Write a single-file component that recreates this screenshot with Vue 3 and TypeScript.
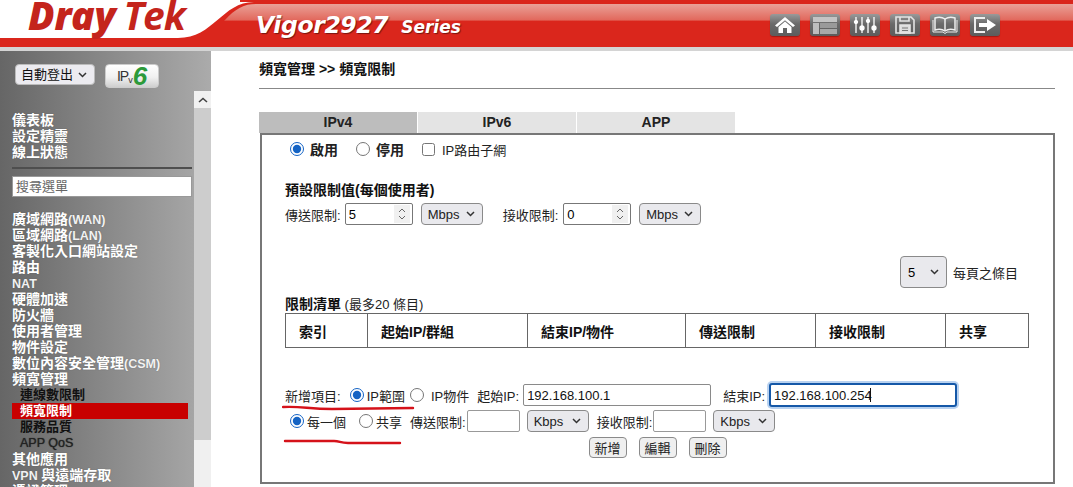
<script setup lang="ts">
import { ref, onMounted } from 'vue'

interface MenuItem {
  label: string
  sub?: boolean
  active?: boolean
}

const topLinks = ['儀表板', '設定精靈', '線上狀態']

const menu: MenuItem[] = [
  { label: '廣域網路(WAN)' },
  { label: '區域網路(LAN)' },
  { label: '客製化入口網站設定' },
  { label: '路由' },
  { label: 'NAT' },
  { label: '硬體加速' },
  { label: '防火牆' },
  { label: '使用者管理' },
  { label: '物件設定' },
  { label: '數位內容安全管理(CSM)' },
  { label: '頻寬管理' },
  { label: '連線數限制', sub: true },
  { label: '頻寬限制', sub: true, active: true },
  { label: '服務品質', sub: true },
  { label: 'APP QoS', sub: true },
  { label: '其他應用' },
  { label: 'VPN 與遠端存取' },
  { label: '憑證管理' },
]

// latin runs in the menu are drawn smaller and lighter than the chinese ones
const parts = (label: string) => label.split(/([A-Za-z() ]+)/).filter((p) => p !== '')
const isLatin = (part: string) => /^[A-Za-z() ]+$/.test(part)

const tabs = ['IPv4', 'IPv6', 'APP']
const columns = ['索引', '起始IP/群組', '結束IP/物件', '傳送限制', '接收限制', '共享']

const enabled = ref('on')
const rangeType = ref('range')
const shareType = ref('each')
const startIp = ref('192.168.100.1')
const endIp = ref('192.168.100.254')
const endInput = ref<HTMLInputElement | null>(null)

onMounted(() => {
  if (endInput.value) {
    endInput.value.focus()
    endInput.value.setSelectionRange(endIp.value.length, endIp.value.length)
  }
})
</script>

<template>
  <div class="page">
    <header class="topbar">
      <svg class="swoosh" width="1073" height="51" viewBox="0 0 1073 51" aria-hidden="true">
        <defs>
          <linearGradient id="gloss" x1="0" y1="0" x2="0" y2="1">
            <stop offset="0" stop-color="#e9a198" />
            <stop offset="0.95" stop-color="#e2685c" />
            <stop offset="1" stop-color="#da261c" />
          </linearGradient>
        </defs>
        <rect x="0" y="47" width="1073" height="4" fill="#d4d4d4" />
        <path d="M0 38 H178 C214 38 222 2 254 2 H1073 V47 H0 Z" fill="#da261c" />
        <path d="M224 21 C236 8 244 4 256 4 H1073 V21 Z" fill="url(#gloss)" />
        <rect x="240" y="0" width="833" height="2" fill="#da261c" />
      </svg>
      <div class="logo"><span class="dray">Dray</span><span class="tek">Tek</span></div>
      <div class="model"><span class="vigor">Vigor2927</span><span class="series">Series</span></div>
      <nav class="tools">
        <button class="tool" aria-label="home">
          <svg width="22" height="18" viewBox="0 0 22 18"><path d="M11 1 L1 9.5 L3 11 L11 4.2 L19 11 L21 9.5 Z M4.5 11 L11 5.6 L17.5 11 V17 H13 V12 H9 V17 H4.5 Z" fill="#fff" /></svg>
        </button>
        <button class="tool" aria-label="layout">
          <svg width="24" height="18" viewBox="0 0 24 18"><rect x="0" y="1" width="24" height="5" fill="#c4c4c4" /><rect x="0" y="7" width="6" height="11" fill="#bdbdbd" /><rect x="7" y="7" width="17" height="5" fill="#9a9a9a" /><rect x="7" y="13" width="17" height="5" fill="#a8a8a8" /></svg>
        </button>
        <button class="tool" aria-label="settings">
          <svg width="24" height="18" viewBox="0 0 24 18" stroke="#fff" stroke-width="1.3" fill="#fff"><path d="M3 1V17M9 1V17M15 1V17M21 1V17" /><circle cx="3" cy="6" r="1.5" /><circle cx="9" cy="12" r="2" /><circle cx="15" cy="5" r="1.5" /><circle cx="21" cy="12" r="2" /></svg>
        </button>
        <button class="tool" aria-label="save">
          <svg width="22" height="18" viewBox="0 0 22 18" fill="none" stroke="#e4e4e4" stroke-width="1.6"><path d="M2 1H17L20 4V17H2Z" /><path d="M6 1V5H15V1" /><path d="M6 9H16V17H6Z" fill="#dcdcdc" /><path d="M8 12H14M8 14.5H14" stroke="#777" stroke-width="1" /></svg>
        </button>
        <button class="tool" aria-label="manual">
          <svg width="26" height="18" viewBox="0 0 26 18" fill="none" stroke="#eee" stroke-width="1.5"><path d="M13 3C10 1 6 1 3 2V14C6 13 10 13 13 15C16 13 20 13 23 14V2C20 1 16 1 13 3Z" /><path d="M13 3V15" /><path d="M1 4V16H11L13 17.5L15 16H25V4" stroke-width="1" /></svg>
        </button>
        <button class="tool" aria-label="logout">
          <svg width="24" height="18" viewBox="0 0 24 18"><path d="M12 2H2V16H12" fill="none" stroke="#eee" stroke-width="2" /><path d="M6 7H14V3L23 9L14 15V11H6Z" fill="#fff" /></svg>
        </button>
      </nav>
    </header>

    <div class="body">
      <aside class="sidebar">
        <div class="side-top">
          <select class="logout-select">
            <option>自動登出</option>
          </select>
          <button class="ipv6"><span class="ip">IP</span><sub>v</sub><span class="six">6</span></button>
        </div>
        <div class="side-scroll">
          <div class="side-menu">
            <a v-for="item in topLinks" :key="item" class="menu-item">{{ item }}</a>
            <hr class="side-rule" />
            <input class="search" placeholder="搜尋選單" />
            <div class="menu-list">
              <a
                v-for="item in menu"
                :key="item.label"
                class="menu-item"
                :class="{ sub: item.sub, active: item.active }"
              ><span v-for="part in parts(item.label)" :key="part" :class="{ latin: isLatin(part) }">{{ part }}</span></a>
            </div>
          </div>
          <div class="scrollbar">
            <div class="scroll-up">
              <svg width="10" height="6" viewBox="0 0 10 6"><path d="M1 5L5 1.5L9 5" fill="none" stroke="#444" stroke-width="1.6" /></svg>
            </div>
            <div class="scroll-thumb"></div>
          </div>
        </div>
      </aside>

      <main class="content">
        <h1 class="crumb">頻寬管理 &gt;&gt; 頻寬限制</h1>
        <hr class="rule" />

        <div class="tabs">
          <div v-for="(tab, i) in tabs" :key="tab" class="tab" :class="{ current: i === 0 }">{{ tab }}</div>
        </div>

        <section class="panel">
          <div class="enable-row">
            <label class="strong"><input v-model="enabled" type="radio" value="on" />啟用</label>
            <label class="strong"><input v-model="enabled" type="radio" value="off" />停用</label>
            <label class="subnet"><input type="checkbox" />IP路由子網</label>
          </div>

          <h2 class="title">預設限制值(每個使用者)</h2>
          <div class="limit-row">
            <span>傳送限制:</span>
            <span class="spin"><input class="num" value="5" /><i class="spin-arrows"><svg width="8" height="14" viewBox="0 0 8 14"><path d="M1 5L4 2L7 5M1 9L4 12L7 9" fill="none" stroke="#666" /></svg></i></span>
            <select class="unit"><option>Mbps</option></select>
            <span class="gap-label">接收限制:</span>
            <span class="spin"><input class="num" value="0" /><i class="spin-arrows"><svg width="8" height="14" viewBox="0 0 8 14"><path d="M1 5L4 2L7 5M1 9L4 12L7 9" fill="none" stroke="#666" /></svg></i></span>
            <select class="unit"><option>Mbps</option></select>
          </div>

          <div class="page-size">
            <select class="size"><option>5</option></select>
            <span>每頁之條目</span>
          </div>

          <div class="list-title"><b>限制清單</b> (最多20 條目)</div>
          <table class="list">
            <thead>
              <tr>
                <th v-for="col in columns" :key="col">{{ col }}</th>
              </tr>
            </thead>
          </table>

          <div class="add-row">
            <span>新增項目:</span>
            <label class="tight range"><input v-model="rangeType" type="radio" value="range" />IP範圍</label>
            <label class="tight obj"><input v-model="rangeType" type="radio" value="object" />IP物件</label>
            <span class="start-label">起始IP:</span>
            <input v-model="startIp" class="ip-input start" />
            <span class="end-label">結束IP:</span>
            <span class="end-wrap">
              <input ref="endInput" v-model="endIp" class="ip-input end" />
              <i class="caret"></i>
            </span>
          </div>

          <div class="share-row">
            <label class="tight each"><input v-model="shareType" type="radio" value="each" />每一個</label>
            <label class="tight shared"><input v-model="shareType" type="radio" value="share" />共享</label>
            <span class="send-label">傳送限制:</span>
            <input class="box" />
            <select class="unit kbps"><option>Kbps</option></select>
            <span class="recv-label">接收限制:</span>
            <input class="box" />
            <select class="unit kbps"><option>Kbps</option></select>
          </div>

          <div class="actions">
            <button class="act">新增</button>
            <button class="act">編輯</button>
            <button class="act">刪除</button>
          </div>

          <!-- hand drawn marks from the screenshot -->
          <svg class="marks" width="140" height="44" viewBox="0 0 140 44" aria-hidden="true">
            <path d="M1 2 C20 1 26 4 50 4 L131 3" fill="none" stroke="#d5121a" stroke-width="2.4" stroke-linecap="round" />
            <path d="M3 36 L52 36 C58 36 58 38 66 38 L118 38" fill="none" stroke="#d5121a" stroke-width="2.4" stroke-linecap="round" />
          </svg>
        </section>
      </main>
    </div>
  </div>
</template>

<style>
html, body { margin: 0; overflow: hidden; background: #fff; }
</style>

<style scoped>
.page { width: 1073px; height: 487px; overflow: hidden; font-family: "Liberation Sans", "Noto Sans CJK TC", sans-serif; font-size: 13px; color: #222; }

/* header */
.topbar { position: relative; height: 51px; display: flex; align-items: flex-start; overflow: hidden; }
.swoosh { position: absolute; left: 0; top: 0; }
.logo { position: relative; margin: -10px 0 0 28px; width: 228px; color: #c4241c; line-height: 50px; white-space: nowrap; }
.dray { font-family: "Open Sans", sans-serif; font-size: 39px; font-weight: 800; font-style: italic; letter-spacing: -0.3px; }
.tek { font-family: "Open Sans", sans-serif; font-size: 39px; font-weight: 700; font-style: italic; letter-spacing: -1px; margin-left: 8px; }
.model { position: relative; width: 514px; margin-top: 10px; color: #fff; font-family: "DejaVu Sans", sans-serif; font-weight: 700; font-style: italic; line-height: 30px; white-space: nowrap; text-shadow: 1px 1px 1px rgba(0,0,0,0.45); }
.vigor { font-size: 23.5px; letter-spacing: -0.4px; }
.series { font-size: 17px; margin-left: 13px; }
.tools { position: relative; display: flex; gap: 10px; margin-top: 14px; }
.tool { width: 30px; height: 22px; padding: 0; border: none; border-radius: 3px; background: linear-gradient(#9a9a9a, #6a6a6a 45%, #5c5c5c); display: flex; align-items: center; justify-content: center; box-shadow: 0 1px 1px rgba(90,0,0,0.4); }

/* sidebar */
.body { display: flex; height: 436px; }
.sidebar { width: 211px; flex: none; background: linear-gradient(90deg, #666, #ababab); overflow: hidden; }
.side-top { height: 40px; display: flex; align-items: flex-start; gap: 10px; padding: 13px 0 0 15px; box-sizing: border-box; }
select { appearance: none; background-image: url("data:image/svg+xml,%3Csvg xmlns='http://www.w3.org/2000/svg' width='9' height='6'%3E%3Cpath d='M1 1l3.5 3.5L8 1' fill='none' stroke='%23333' stroke-width='1.5'/%3E%3C/svg%3E"); background-repeat: no-repeat; background-position: right 7px center; padding: 0 0 0 6px; }
.logout-select { width: 80px; height: 21px; font: 13px "Liberation Sans", "Noto Sans CJK TC", sans-serif; border: 1px solid #bbb; border-radius: 4px; background-color: #ecebf0; color: #111; padding-left: 5px; }
.ipv6 { width: 54px; height: 24px; padding: 0; border: 1px solid #ccc; border-radius: 4px; background: linear-gradient(#fff, #f1f1f1 55%, #cfcfcf); display: flex; align-items: center; justify-content: center; color: #333; }
.ip { font-size: 14px; font-weight: 400; letter-spacing: -1px; }
.ipv6 sub { font-size: 9px; line-height: 1; margin: 9px 0 0 0; }
.six { color: #2c9a3a; font-size: 26px; line-height: 22px; font-weight: 700; font-style: italic; }
.side-scroll { display: flex; height: 396px; }
.side-menu { width: 194px; flex: none; padding: 21px 0 0 12px; box-sizing: border-box; }
.menu-item { display: block; height: 16px; line-height: 16px; font-size: 14px; font-weight: 700; color: #fff; white-space: nowrap; text-shadow: 0 0 1px rgba(60,60,60,0.5); }
.menu-item .latin { font-size: 12.5px; color: #f2f2f2; }
.menu-item.sub { padding-left: 8px; font-size: 13px; color: #111; text-shadow: none; }
.menu-item.sub .latin { color: #222; font-weight: 400; text-shadow: 0 0 1px #222; }
.menu-item.active { width: 168px; background: #c80000; color: #fff; }
.side-rule { width: 180px; margin: 7px 0 7px; border: none; border-top: 2px solid #4e4e4e; }
.search { display: block; width: 180px; height: 21px; box-sizing: border-box; padding: 1px 3px; border: 1px solid #999; background: #fff; font: 13px "Liberation Sans", "Noto Sans CJK TC", sans-serif; }
.search::placeholder { color: #666; }
.menu-list { margin-top: 14px; }
.scrollbar { width: 17px; flex: none; background: #f0f0f0; }
.scroll-up { height: 17px; background: #f1f1f1; display: flex; align-items: center; justify-content: center; }
.scroll-thumb { height: 332px; background: #cdcdcd; }

/* content */
.content { width: 796px; padding-left: 48px; }
.crumb { margin: 10px 0 0; font-size: 14px; line-height: 16px; font-weight: 700; color: #111; }
.rule { margin: 11px 0 0; border: none; border-top: 1px solid #888; }
.tabs { display: flex; gap: 1px; margin-top: 23px; height: 21px; }
.tab { width: 158px; background: #e4e4e4; text-align: center; font-size: 14px; font-weight: 700; line-height: 21px; color: #222; }
.tab.current { background: #bdbdbd; }
.panel { position: relative; height: 351px; box-sizing: border-box; margin-left: 1px; border: 2px solid #777; padding-left: 23px; }

.enable-row { display: flex; align-items: center; height: 28px; padding-left: 5px; }
label { display: inline-flex; align-items: center; white-space: nowrap; }
input[type="radio"] { width: 14px; height: 14px; margin: 0 6px 0 0; accent-color: #1463c4; }
.enable-row input[type="radio"] { margin-right: 6px; }
.strong { font-size: 14px; font-weight: 700; margin-right: 18px; }
.subnet input { margin: 0 7px 0 0; }
.title { margin: 19px 0 0; font-size: 14px; line-height: 16px; font-weight: 700; color: #111; }
.limit-row { display: flex; align-items: center; height: 24px; margin-top: 4px; }
.spin { position: relative; display: inline-block; width: 68px; height: 22px; margin-left: 4px; }
.gap-label + .spin { margin-left: 5px; }
.num { width: 100%; height: 100%; box-sizing: border-box; border: 1px solid #777; border-radius: 2px; padding: 1px 3px; font: 13px "Liberation Sans", sans-serif; }
.spin-arrows { position: absolute; right: 3px; top: 2px; width: 16px; height: 18px; background: #f0f0f0; display: flex; align-items: center; justify-content: center; }
.unit { width: 62px; height: 22px; margin-left: 8px; border: 1px solid #8a8a8a; border-radius: 4px; background-color: #e9e9ed; font: 13px "Liberation Sans", sans-serif; color: #222; }
.gap-label { margin-left: 20px; }
.page-size { display: flex; align-items: center; justify-content: flex-end; gap: 6px; height: 32px; margin: 30px 35px 0 0; }
.size { width: 47px; height: 32px; border: 1px solid #8a8a8a; border-radius: 4px; background-color: #e9e9ed; font: 13px "Liberation Sans", sans-serif; padding-left: 7px; }
.list-title { margin-top: 8px; height: 16px; line-height: 16px; color: #222; }
.list-title b { color: #111; font-size: 14px; }
.list { width: 744px; height: 35px; border-collapse: collapse; table-layout: fixed; margin-top: 1px; }
.list th { box-sizing: border-box; border: 1px solid #666; padding: 0 0 0 13px; text-align: left; font-size: 14px; color: #111; }
.list th:nth-child(1) { width: 82px; }
.list th:nth-child(2) { width: 160px; }
.list th:nth-child(3) { width: 158px; }
.list th:nth-child(4) { width: 130px; }
.list th:nth-child(5) { width: 130px; }

.add-row { display: flex; align-items: center; height: 24px; margin-top: 35px; }
.tight input { margin-right: 3px; }
.range { margin-left: 9px; }
.obj { margin-left: 5px; }
.obj input { margin-right: 7px; }
.start-label { margin-left: 8px; }
.ip-input { height: 22px; box-sizing: border-box; border: 1px solid #8a8a8a; border-radius: 2px; padding: 1px 3px; font: 13px "Liberation Sans", sans-serif; color: #111; }
.start { width: 188px; margin-left: 4px; }
.end-label { margin-left: 12px; }
.end-wrap { position: relative; display: inline-flex; margin-left: 4px; }
.end { width: 188px; height: 24px; padding: 1px 3px; outline: none; border: 2px solid #1558a8; border-radius: 3px; box-shadow: 0 0 0 2px #b9d2f0; caret-color: transparent; }
.caret { position: absolute; left: 101px; top: 5px; width: 1px; height: 14px; background: #111; }
.share-row { display: flex; align-items: center; height: 24px; margin-top: 2px; padding-left: 5px; }
.each input { margin-right: 3px; }
.shared input { margin-right: 3px; }
.each { margin-right: -2px; }
.shared { margin-left: 15px; }
.send-label { margin-left: 8px; }
.box { width: 53px; height: 22px; box-sizing: border-box; margin-left: 1px; border: 1px solid #999; border-radius: 2px; }
.kbps { margin-left: 7px; }
.recv-label { margin-left: 8px; }
.actions { display: flex; justify-content: center; gap: 12px; margin-top: 4px; padding-right: 23px; }
.act { width: 38px; height: 21px; padding: 0; border: 1px solid #8a8a8a; border-radius: 4px; background: #efefef; font: 13px "Liberation Sans", "Noto Sans CJK TC", sans-serif; color: #222; }
.marks { position: absolute; left: 20px; top: 270px; pointer-events: none; }
</style>
